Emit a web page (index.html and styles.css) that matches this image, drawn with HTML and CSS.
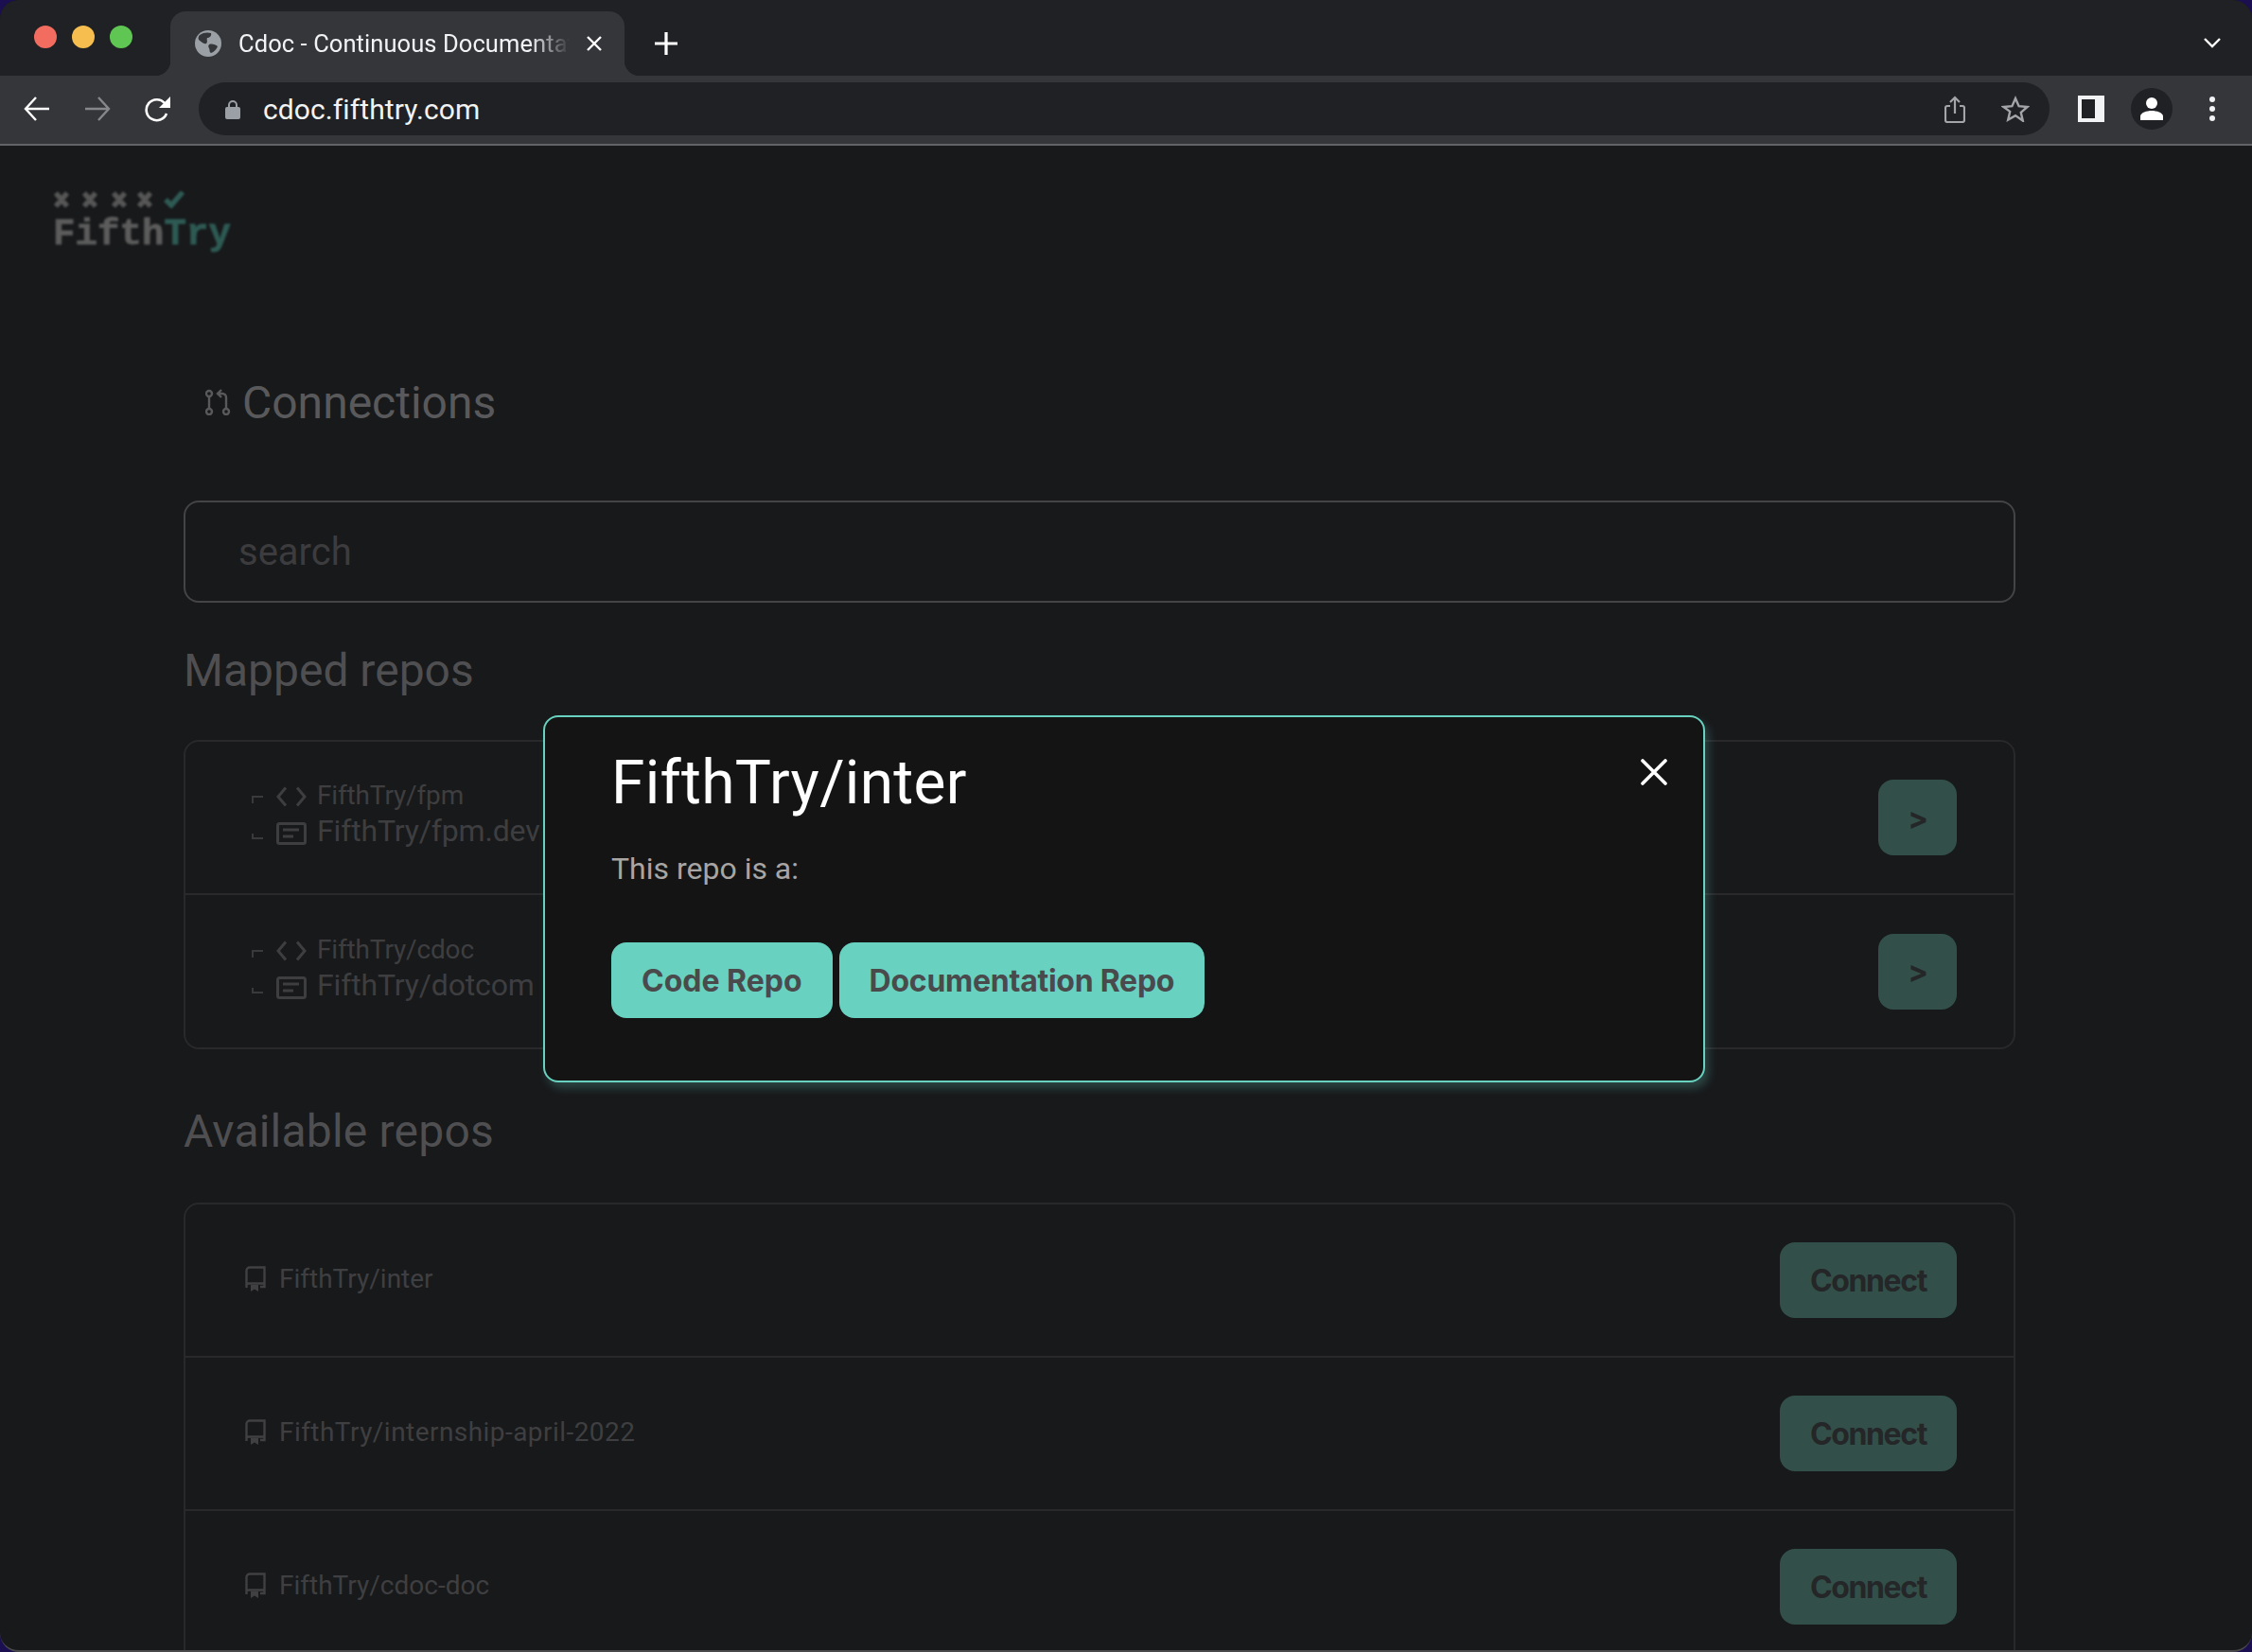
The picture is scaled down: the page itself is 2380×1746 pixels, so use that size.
FILE: index.html
```html
<!DOCTYPE html>
<html lang="en">
<head>
<meta charset="utf-8">
<title>Cdoc - Continuous Documentation</title>
<link rel="stylesheet" href="styles.css">
</head>
<body>
<div class="window">
  <div class="tabstrip">
    <div class="lights"><span class="light red"></span><span class="light yellow"></span><span class="light green"></span></div>
    <div class="tab">
      <svg class="globe" width="28" height="28" viewBox="0 0 28 28"><circle cx="14" cy="14" r="14" fill="#9aa0a6"/><path d="M5 5c4-3 9-3 12-2 1 3-2 5-4 5-1 2 1 4-1 6-3 1-5-2-8-4-1-2 0-4 1-5zM15 15c3-1 7 0 9 2-1 3-4 6-7 7-2-1-1-3-2-5-1-1-1-3 0-4z" fill="#35363a"/></svg>
      <span class="tab-title">Cdoc - Continuous Documentation</span>
      <svg class="tab-close" width="18" height="16" viewBox="0 0 18 16"><path d="M2 1l14 14M16 1L2 15" stroke="#fff" stroke-width="2.4" fill="none"/></svg>
    </div>
    <svg class="newtab" width="24" height="24" viewBox="0 0 24 24"><path d="M12 0v24M0 12h24" stroke="#fff" stroke-width="3.2" stroke-linecap="round"/></svg>
    <svg class="tabmenu" width="18" height="11" viewBox="0 0 18 11"><path d="M1 1l8 8 8-8" stroke="#fff" stroke-width="2.4" fill="none"/></svg>
  </div>
  <div class="toolbar">
    <svg class="nav" width="28" height="26" viewBox="0 0 28 26"><path d="M27 13H3M13 1L2 13l11 12" stroke="#fff" stroke-width="2.4" fill="none"/></svg>
    <svg class="nav" width="28" height="26" viewBox="0 0 28 26"><path d="M1 13h24M15 1l11 12-11 12" stroke="#85878a" stroke-width="2.4" fill="none"/></svg>
    <svg class="nav" width="28" height="28" viewBox="0 0 28 28"><path d="M23 19a11 11 0 1 1-2-11" stroke="#fff" stroke-width="2.6" fill="none"/><path d="M27 1v12H15z" fill="#fff"/></svg>
    <div class="omnibox">
      <svg class="lock" width="16" height="21" viewBox="0 0 16 21"><path d="M4 9V6a4 4 0 0 1 8 0v3" stroke="#9aa0a6" stroke-width="2" fill="none"/><rect y="8" width="16" height="13" rx="2" fill="#9aa0a6"/></svg>
      <span class="url">cdoc.fifthtry.com</span>
      <svg class="share" width="22" height="29" viewBox="0 0 22 29"><path d="M6 11H3a2 2 0 0 0-2 2v13a2 2 0 0 0 2 2h16a2 2 0 0 0 2-2V13a2 2 0 0 0-2-2h-3M11 19V2M6 7l5-5 5 5" stroke="#a3a5a8" stroke-width="2.2" fill="none"/></svg>
      <svg class="star" width="30" height="28" viewBox="0 0 30 28"><path d="M15 3l3.6 8.2 8.9.8-6.700 5.900 2 8.700L15 21.100 7.200 25.600l2-8.700L2.500 12l8.900-.8z" stroke="#a3a5a8" stroke-width="2.400" fill="none"/></svg>
    </div>
    <div class="sidepanel"><span class="sidepanel-dark"></span></div>
    <div class="avatar"><svg width="24" height="24" viewBox="0 0 24 24"><circle cx="12" cy="6" r="6" fill="#fff"/><path d="M0 24v-4c0-4 7-6 12-6s12 2 12 6v4z" fill="#fff"/></svg></div>
    <div class="dots"><span></span><span></span><span></span></div>
  </div>

  <div class="page">
    <header class="site-header">
      <div class="logo">
        <svg class="logo-marks" width="142" height="18" viewBox="0 0 142 18"><g stroke="#565656" stroke-width="5.500" fill="none"><path d="M3 2l12 14M15 2L3 16M33 2l12 14M45 2L33 16M64 2l12 14M76 2L64 16M91 2l12 14M103 2L91 16"/></g><path d="M119 9l6 6 12-14" stroke="#2e5a54" stroke-width="5.500" fill="none"/></svg>
        <div class="logo-word">Fifth<span class="logo-try">Try</span></div>
      </div>
    </header>
    <main class="content">
      <h1 class="title-row">
        <svg width="27" height="28" viewBox="0 0 27 28"><g stroke="#59595b" stroke-width="2.4" fill="none"><circle cx="4" cy="5" r="3"/><circle cx="4" cy="24" r="3"/><circle cx="22" cy="24" r="3"/><path d="M4 8v13M22 21V9a4 4 0 0 0-4-4h-5M17 1l-4 4 4 4"/></g></svg>
        <span>Connections</span>
      </h1>
      <div class="search">search</div>

      <h2 class="section-title first">Mapped repos</h2>
      <section class="box">
        <div class="row mapped">
          <div class="pair">
            <div class="pair-line small">
              <svg class="mark" width="12" height="8" viewBox="0 0 12 8"><path d="M1 8V1h11" stroke="#3a3a3c" stroke-width="2" fill="none"/></svg>
              <svg class="ico" width="32" height="22" viewBox="0 0 32 22"><path d="M10 1.500L2 11l8 9.500M22 1.500L30 11l-8 9.500" stroke="#3e3e40" stroke-width="3" fill="none"/></svg>
              <span class="pair-name">FifthTry/fpm</span>
            </div>
            <div class="pair-line large">
              <svg class="mark" width="12" height="6" viewBox="0 0 12 6"><path d="M1 0v5h11" stroke="#3a3a3c" stroke-width="2" fill="none"/></svg>
              <svg class="ico" width="32" height="24" viewBox="0 0 32 24"><rect x="1.500" y="1.500" width="29" height="21" rx="2" stroke="#3e3e40" stroke-width="3" fill="none"/><path d="M7 8h17M7 15h11" stroke="#3e3e40" stroke-width="3"/></svg>
              <span class="pair-name">FifthTry/fpm.dev</span>
            </div>
          </div>
          <button class="btn-dim">&gt;</button>
        </div>
        <div class="row mapped">
          <div class="pair">
            <div class="pair-line small">
              <svg class="mark" width="12" height="8" viewBox="0 0 12 8"><path d="M1 8V1h11" stroke="#3a3a3c" stroke-width="2" fill="none"/></svg>
              <svg class="ico" width="32" height="22" viewBox="0 0 32 22"><path d="M10 1.500L2 11l8 9.500M22 1.500L30 11l-8 9.500" stroke="#3e3e40" stroke-width="3" fill="none"/></svg>
              <span class="pair-name">FifthTry/cdoc</span>
            </div>
            <div class="pair-line large">
              <svg class="mark" width="12" height="6" viewBox="0 0 12 6"><path d="M1 0v5h11" stroke="#3a3a3c" stroke-width="2" fill="none"/></svg>
              <svg class="ico" width="32" height="24" viewBox="0 0 32 24"><rect x="1.500" y="1.500" width="29" height="21" rx="2" stroke="#3e3e40" stroke-width="3" fill="none"/><path d="M7 8h17M7 15h11" stroke="#3e3e40" stroke-width="3"/></svg>
              <span class="pair-name">FifthTry/dotcom</span>
            </div>
          </div>
          <button class="btn-dim">&gt;</button>
        </div>
      </section>

      <h2 class="section-title second">Available repos</h2>
      <section class="box">
        <div class="row available">
          <div class="repo">
            <svg width="22" height="27" viewBox="0 0 22 27"><path d="M1.500 23V5a3.500 3.500 0 0 1 3.500-3.500h15.500V22H16M1.500 20.500a2 2 0 0 1 2-2h17" stroke="#404042" stroke-width="2.400" fill="none"/><path d="M6 20h8v7l-4-2.500L6 27z" fill="#404042"/></svg>
            <span>FifthTry/inter</span>
          </div>
          <button class="btn-dim">Connect</button>
        </div>
        <div class="row available">
          <div class="repo">
            <svg width="22" height="27" viewBox="0 0 22 27"><path d="M1.500 23V5a3.500 3.500 0 0 1 3.500-3.500h15.500V22H16M1.500 20.500a2 2 0 0 1 2-2h17" stroke="#404042" stroke-width="2.400" fill="none"/><path d="M6 20h8v7l-4-2.500L6 27z" fill="#404042"/></svg>
            <span class="repo-long">FifthTry/internship-april-2022</span>
          </div>
          <button class="btn-dim">Connect</button>
        </div>
        <div class="row available">
          <div class="repo">
            <svg width="22" height="27" viewBox="0 0 22 27"><path d="M1.500 23V5a3.500 3.500 0 0 1 3.500-3.500h15.500V22H16M1.500 20.500a2 2 0 0 1 2-2h17" stroke="#404042" stroke-width="2.400" fill="none"/><path d="M6 20h8v7l-4-2.500L6 27z" fill="#404042"/></svg>
            <span>FifthTry/cdoc-doc</span>
          </div>
          <button class="btn-dim">Connect</button>
        </div>
      </section>
    </main>
  </div>

  <div class="modal" role="dialog">
    <svg class="modal-close" width="28" height="28" viewBox="0 0 28 28"><path d="M2 2l24 24M26 2L2 26" stroke="#fff" stroke-width="3.600" stroke-linecap="round" fill="none"/></svg>
    <div class="modal-title">FifthTry/inter</div>
    <div class="modal-text">This repo is a:</div>
    <div class="modal-actions">
      <button class="btn-primary">Code Repo</button>
      <button class="btn-primary btn-long">Documentation Repo</button>
    </div>
  </div>
</div>
</body>
</html>
```
FILE: styles.css
```css
* { box-sizing: border-box; }
html, body { margin: 0; padding: 0; height: 100%; overflow: hidden; }
body { background: #1b0f52; font-family: Roboto, "Liberation Sans", sans-serif; }
button { font-family: inherit; border: 0; margin: 0; }

.window {
  position: relative;
  width: 2380px;
  height: 1746px;
  background: #18191b;
  border-bottom: 2px solid #4a4a4c;
  border-radius: 20px;
  overflow: hidden;
}

/* Browser chrome */
.tabstrip {
  display: flex;
  align-items: flex-end;
  height: 80px;
  background: #202124;
  padding-left: 36px;
}
.lights { display: flex; gap: 16px; align-self: flex-start; margin-top: 27px; }
.light { width: 24px; height: 24px; border-radius: 50%; }
.red { background: #f26d60; }
.yellow { background: #f5be4f; }
.green { background: #5fc653; }

.tab {
  position: relative;
  display: flex;
  align-items: center;
  width: 480px;
  height: 68px;
  margin-left: 40px;
  padding-left: 26px;
  background: #35363a;
  border-radius: 16px 16px 0 0;
}
.tab::before, .tab::after {
  content: "";
  position: absolute;
  bottom: 0;
  width: 16px;
  height: 16px;
}
.tab::before { left: -16px; background: radial-gradient(circle at 0 0, transparent 16px, #35363a 16.500px); }
.tab::after { right: -16px; background: radial-gradient(circle at 100% 0, transparent 16px, #35363a 16.500px); }
.globe { flex: none; }
.tab-title {
  width: 350px;
  margin-left: 18px;
  color: #f1f3f4;
  font: 400 25.500px Roboto, sans-serif;
  letter-spacing: .08px;
  white-space: nowrap;
  overflow: hidden;
  -webkit-mask-image: linear-gradient(to right, #000 88%, transparent 100%);
  mask-image: linear-gradient(to right, #000 88%, transparent 100%);
}
.tab-close { flex: none; margin-left: 17px; }
.newtab { margin: 0 0 22px 32px; }
.tabmenu { margin: 0 33px 29px auto; }

.toolbar {
  display: flex;
  align-items: center;
  height: 74px;
  padding: 0 0 2px 25px;
  background: #35363a;
  border-bottom: 2px solid #626366;
}
.nav { flex: none; margin-right: 36px; }
.nav:nth-child(3) { margin-right: 29px; }
.omnibox {
  display: flex;
  align-items: center;
  width: 1956px;
  height: 56px;
  padding: 0 21px 0 28px;
  border-radius: 28px;
  background: #202124;
}
.lock { flex: none; }
.url { margin-left: 24px; color: #f1f3f4; font: 400 30px Roboto, sans-serif; letter-spacing: .1px; }
.share { margin-left: auto; }
.star { margin-left: 38px; }
.sidepanel {
  display: flex;
  flex: none;
  width: 28px;
  height: 28px;
  margin-left: 30px;
  padding: 4px;
  background: #f1f3f4;
}
.sidepanel-dark { width: 14px; height: 20px; background: #202124; }
.avatar {
  display: flex;
  flex: none;
  align-items: center;
  justify-content: center;
  width: 44px;
  height: 44px;
  margin-left: 28px;
  border-radius: 50%;
  background: #202124;
}
.dots { display: flex; flex: none; flex-direction: column; gap: 4px; margin-left: 39px; }
.dots span { width: 6px; height: 6px; border-radius: 50%; background: #f1f3f4; }

/* Page */
.site-header { height: 166px; padding: 48px 0 0 56px; }
.logo { filter: blur(1px); }
.logo-marks { display: block; }
.logo-word {
  margin-top: 6px;
  color: #5c5c5c;
  font: 700 39px/44px "Liberation Mono", monospace;
  letter-spacing: .1px;
  -webkit-text-stroke: .8px currentColor;
}
.logo-try { color: #2e5a54; }

.content { padding: 0 250px 0 194px; }
.title-row {
  display: flex;
  align-items: center;
  gap: 12px;
  height: 64px;
  margin: 73px 0 0;
  padding-left: 23px;
  color: #59595b;
  font-size: 48px;
  font-weight: 400;
}
.search {
  height: 108px;
  margin-top: 72px;
  padding-left: 56px;
  border: 2px solid #444446;
  border-radius: 16px;
  color: #3c3c3e;
  font-size: 40px;
  line-height: 106px;
}
.section-title {
  height: 64px;
  margin: 0;
  color: #4f4f51;
  font-size: 48px;
  font-weight: 400;
  line-height: 64px;
}
.section-title.first { margin-top: 40px; }
.section-title.second { margin-top: 55px; letter-spacing: .2px; }
.box {
  margin-top: 41px;
  border: 2px solid #29292b;
  border-radius: 16px;
}
.section-title.second + .box { margin-top: 43px; }
.row {
  display: flex;
  align-items: center;
  justify-content: space-between;
  height: 162px;
  padding-right: 60px;
  border-bottom: 2px solid #29292b;
}
.mapped { padding-left: 70px; }
.mapped:last-child { height: 161px; border-bottom: 0; }
.available { padding-left: 63px; }

.pair { margin-bottom: 8px; color: #3e3e40; }
.pair-line { display: flex; align-items: center; }
.pair-line.small { height: 36px; font-size: 28px; }
.pair-line.large { height: 42px; font-size: 32px; }
.pair-name { letter-spacing: -.15px; }
.pair-line.small .pair-name { margin-top: 3px; }
.mark { flex: none; margin: 12px 14px 0 0; }
.ico { flex: none; margin: 6px 11px 0 0; }

.repo { display: flex; align-items: center; gap: 14px; margin-bottom: 4px; color: #3f3f41; font-size: 28px; }
.repo-long { letter-spacing: .45px; }

.btn-dim {
  height: 80px;
  padding: 0 32px;
  border-radius: 16px;
  background: #325049;
  color: #252628;
  font-family: Inter, sans-serif;
  font-size: 32px;
  font-weight: 700;
  letter-spacing: -1.4px;
}
.mapped .btn-dim { width: 83px; padding: 0; }

/* Modal */
.modal {
  position: absolute;
  left: 574px;
  top: 756px;
  width: 1228px;
  height: 388px;
  padding: 30px 70px 0;
  border: 2px solid #68d1bf;
  border-radius: 16px;
  background: #141414;
  box-shadow: 4px 6px 10px rgba(104, 209, 191, .25);
}
.modal-close { position: absolute; right: 38px; top: 44px; }
.modal-title { color: #fff; font-size: 64px; line-height: 80px; letter-spacing: .3px; }
.modal-text { margin-top: 26px; color: #a8a5a3; font-size: 32px; line-height: 48px; }
.modal-actions { display: flex; gap: 7px; margin-top: 54px; }
.btn-primary {
  height: 80px;
  padding: 0 32px;
  border-radius: 16px;
  background: #68d1bf;
  color: #4a4a4c;
  font-family: Inter, sans-serif;
  font-size: 32px;
  font-weight: 700;
}
.btn-long { letter-spacing: -.25px; }
```
